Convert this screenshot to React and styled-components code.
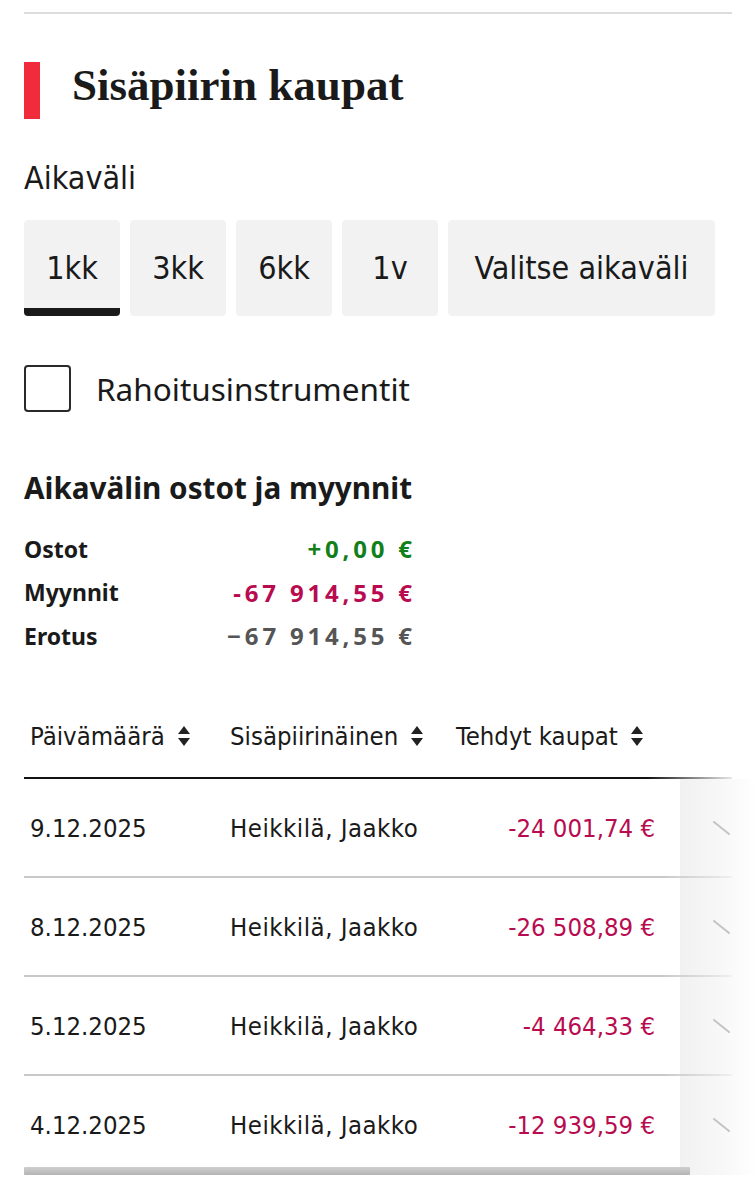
import React from "react";
import styled, { createGlobalStyle } from "styled-components";

const Global = createGlobalStyle`
  html, body { margin: 0; padding: 0; background: #fff; }
  body { font-family: "Noto Sans", sans-serif; color: #1a1a1a; }
  * { box-sizing: border-box; }
`;

const COND = `"DejaVu Sans Condensed", "Liberation Sans Narrow", sans-serif`;

const Page = styled.div`
  width: 756px;
  padding: 12px 0 24px;
  overflow: hidden;
`;

const Rule = styled.div`
  margin: 0 24px;
  height: 2px;
  background: #dcdcdc;
`;

const Header = styled.div`
  display: flex;
  align-items: center;
  gap: 32px;
  margin: 48px 24px 0;
  height: 57px;
`;

const RedBar = styled.div`
  width: 16px;
  height: 57px;
  background: #ef2b3c;
`;

const Title = styled.h1`
  margin: -10px 0 0;
  font-family: "Liberation Serif", "DejaVu Serif", serif;
  font-weight: 700;
  font-size: 45px;
  line-height: 1;
  letter-spacing: 0;
  color: #1a1a1a;
`;

const Label = styled.div`
  margin: 41px 24px 0;
  font-family: ${COND};
  font-size: 32px;
  line-height: 36px;
  color: #1a1a1a;
`;

const Tabs = styled.div`
  display: flex;
  gap: 10px;
  margin: 24px 24px 0;
`;

const Tab = styled.button`
  position: relative;
  height: 96px;
  width: ${(p) => p.$w}px;
  border: none;
  border-radius: 4px;
  background: #f2f2f2;
  font-family: ${COND};
  font-size: 32px;
  color: #1a1a1a;
  padding: 0;
  overflow: hidden;
  &::after {
    content: "";
    position: absolute;
    left: 0;
    right: 0;
    bottom: 0;
    height: 8px;
    background: ${(p) => (p.$active ? "#1a1a1a" : "transparent")};
  }
`;

const CheckRow = styled.label`
  display: flex;
  align-items: center;
  gap: 25px;
  margin: 49px 24px 0;
`;

const Box = styled.span`
  width: 47px;
  height: 47px;
  border: 2px solid #2a2a2a;
  border-radius: 4px;
`;

const CheckText = styled.span`
  font-family: "Noto Sans", sans-serif;
  font-size: 31.5px;
  line-height: 40px;
  color: #1a1a1a;
`;

const SubTitle = styled.h2`
  margin: 56px 24px 0;
  font-family: "Noto Sans", sans-serif;
  font-weight: 700;
  font-size: 29.7px;
  line-height: 40px;
  color: #1a1a1a;
`;

const Summary = styled.div`
  margin: 19px 24px 0;
  width: 388px;
  display: flex;
  flex-direction: column;
`;

const SumRow = styled.div`
  display: flex;
  justify-content: space-between;
  align-items: center;
  height: 43.5px;
  font-family: "Noto Sans", sans-serif;
  font-weight: 700;
  font-size: 23px;
`;

const SumValue = styled.span`
  color: ${(p) => p.$color};
  font-size: 24px;
  letter-spacing: 3.8px;
  margin-right: -3.8px;
`;

const TableWrap = styled.div`
  margin: 30px 0 0 24px;
  position: relative;
`;

const HeadRow = styled.div`
  display: flex;
  align-items: center;
  height: 91px;
  padding-top: 6px;
  position: relative;
  width: 708px;
  &::after {
    content: "";
    position: absolute;
    left: 0;
    right: 0;
    bottom: 0;
    height: 2px;
    background: linear-gradient(to right, #111 0, #111 88%, rgba(17,17,17,0.1) 100%);
  }
`;

const HeadCell = styled.div`
  display: flex;
  align-items: center;
  gap: 12px;
  width: ${(p) => p.$w}px;
  padding-left: ${(p) => p.$pl || 0}px;
  font-family: ${COND};
  font-size: 25.5px;
  color: #1a1a1a;
`;

const Row = styled.div`
  display: flex;
  align-items: center;
  height: 99px;
  width: 732px;
  position: relative;
  &::after {
    content: "";
    position: absolute;
    left: 0;
    width: 708px;
    bottom: 0;
    height: 2px;
    background: ${(p) =>
      p.$last
        ? "transparent"
        : "linear-gradient(to right, #c8c8c8 0, #c8c8c8 90%, rgba(200,200,200,0.2) 100%)"};
  }
`;

const Cell = styled.div`
  width: ${(p) => p.$w}px;
  padding-left: ${(p) => p.$pl || 0}px;
  text-align: ${(p) => p.$align || "left"};
  font-family: ${COND};
  font-size: 25.5px;
  letter-spacing: ${(p) => p.$ls || 0}px;
  color: ${(p) => p.$color || "#1a1a1a"};
`;

const ActionCell = styled.div`
  margin-left: 25px;
  align-self: stretch;
  width: 76px;
  flex-shrink: 0;
  display: flex;
  align-items: center;
  padding-left: 33px;
  background: linear-gradient(to right, #f1f1f1 0, #f7f7f7 50%, #fdfdfd 90%, #fff 100%);
`;

const ScrollBar = styled.div`
  position: relative;
  margin-top: -8px;
  width: 666px;
  height: 8px;
  border-radius: 1px;
  background: linear-gradient(to bottom, #cfcfcf 0, #b4b4b4 100%);
`;

const SortIcon = () => (
  <svg width="14" height="22" viewBox="0 0 14 22" aria-hidden="true">
    <path d="M7 1 L13 9 H1 Z" fill="#222" />
    <path d="M7 21 L13 13 H1 Z" fill="#222" />
  </svg>
);

const Slash = () => (
  <svg width="17" height="14" viewBox="0 0 17 14" aria-hidden="true">
    <path d="M1 1 L16 13" stroke="#c4c4c4" strokeWidth="2" strokeLinecap="round" />
  </svg>
);

const rows = [
  ["9.12.2025", "Heikkilä, Jaakko", "-24 001,74 €"],
  ["8.12.2025", "Heikkilä, Jaakko", "-26 508,89 €"],
  ["5.12.2025", "Heikkilä, Jaakko", "-4 464,33 €"],
  ["4.12.2025", "Heikkilä, Jaakko", "-12 939,59 €"],
];

export default function App() {
  return (
    <Page>
      <Global />
      <Rule />
      <Header>
        <RedBar />
        <Title>Sisäpiirin kaupat</Title>
      </Header>
      <Label>Aikaväli</Label>
      <Tabs>
        <Tab $w={96} $active>1kk</Tab>
        <Tab $w={96}>3kk</Tab>
        <Tab $w={96}>6kk</Tab>
        <Tab $w={96}>1v</Tab>
        <Tab $w={267}>Valitse aikaväli</Tab>
      </Tabs>
      <CheckRow>
        <Box />
        <CheckText>Rahoitusinstrumentit</CheckText>
      </CheckRow>
      <SubTitle>Aikavälin ostot ja myynnit</SubTitle>
      <Summary>
        <SumRow>
          <span>Ostot</span>
          <SumValue $color="#12801a">+0,00 €</SumValue>
        </SumRow>
        <SumRow>
          <span>Myynnit</span>
          <SumValue $color="#b80b50">-67 914,55 €</SumValue>
        </SumRow>
        <SumRow>
          <span>Erotus</span>
          <SumValue $color="#555">−67 914,55 €</SumValue>
        </SumRow>
      </Summary>
      <TableWrap>
        <HeadRow>
          <HeadCell $w={206} $pl={6}>Päivämäärä <SortIcon /></HeadCell>
          <HeadCell $w={226}>Sisäpiirinäinen <SortIcon /></HeadCell>
          <HeadCell $w={220}>Tehdyt kaupat <SortIcon /></HeadCell>
        </HeadRow>
        {rows.map((r, i) => (
          <Row key={r[0]} $last={i === rows.length - 1}>
            <Cell $w={206} $pl={6}>{r[0]}</Cell>
            <Cell $w={226} $ls={0.5}>{r[1]}</Cell>
            <Cell $w={199} $align="right" $color="#b80b50">{r[2]}</Cell>
            <ActionCell><Slash /></ActionCell>
          </Row>
        ))}
        <ScrollBar />
      </TableWrap>
    </Page>
  );
}
